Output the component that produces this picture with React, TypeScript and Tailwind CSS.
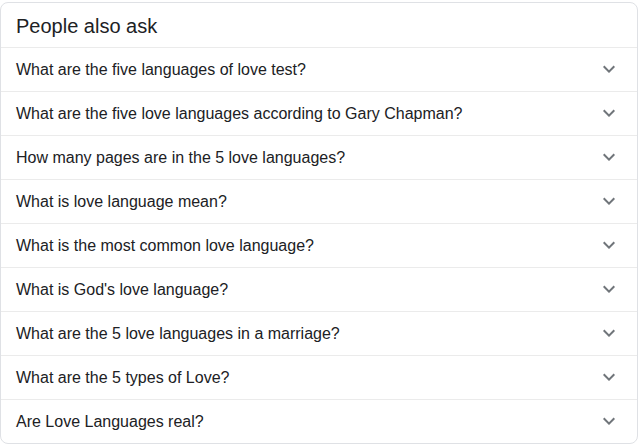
import React from "react";

const questions = [
  "What are the five languages of love test?",
  "What are the five love languages according to Gary Chapman?",
  "How many pages are in the 5 love languages?",
  "What is love language mean?",
  "What is the most common love language?",
  "What is God's love language?",
  "What are the 5 love languages in a marriage?",
  "What are the 5 types of Love?",
  "Are Love Languages real?",
];

function Chevron() {
  return (
    <svg width="24" height="24" viewBox="0 0 24 24" className="shrink-0 mb-[2px]">
      <path d="M16.59 8.59L12 13.17 7.41 8.59 6 10l6 6 6-6z" fill="#70757a" />
    </svg>
  );
}

export default function App() {
  return (
    <div className="w-[640px] h-[447px] bg-white pt-[2px]" style={{ fontFamily: "Arial, 'Liberation Sans', sans-serif" }}>
      <div className="w-[638px] border border-[#dfe1e5] rounded-[8px] bg-white">
        <div className="h-[44px] flex items-center pl-[15px] pt-[1px] text-[20px] text-[#202124]">People also ask</div>
        {questions.map((q) => (
          <div key={q} className="h-[44px] border-t border-[#ebebeb] flex items-center justify-between pl-[15px] pr-[16px]">
            <span className="text-[16px] text-[#202124]">{q}</span>
            <Chevron />
          </div>
        ))}
      </div>
    </div>
  );
}
